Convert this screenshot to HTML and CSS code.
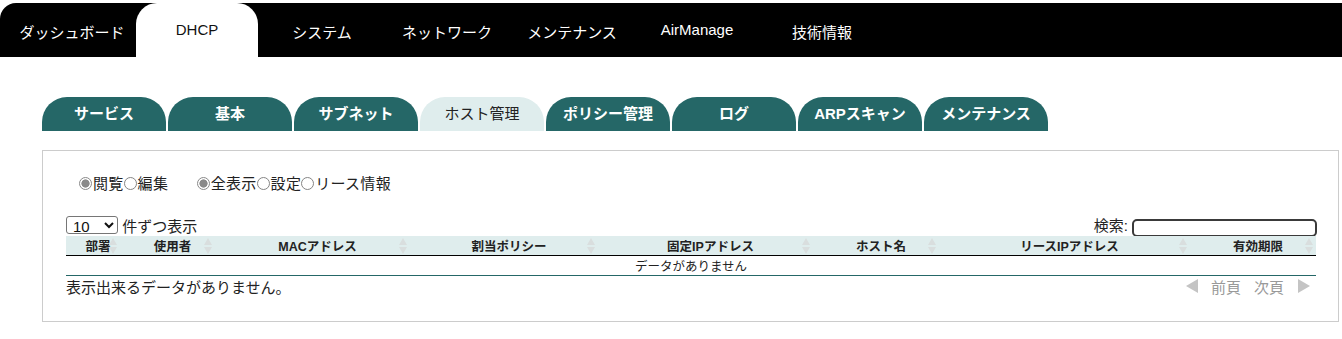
FILE: index.html
```html
<!DOCTYPE html>
<html lang="ja">
<head>
    <meta charset="UTF-8">
    <meta name="viewport" content="width=device-width, initial-scale=1.0">
    <title>DHCP - ホスト管理</title>
    <link rel="stylesheet" href="styles.css">
</head>
<body>
    <nav class="global-nav">
        <a class="nav-item" href="#">ダッシュボード</a>
        <a class="nav-item latin active" href="#">DHCP</a>
        <a class="nav-item" href="#">システム</a>
        <a class="nav-item" href="#">ネットワーク</a>
        <a class="nav-item" href="#">メンテナンス</a>
        <a class="nav-item latin" href="#">AirManage</a>
        <a class="nav-item" href="#">技術情報</a>
    </nav>

    <div class="sub-tabs">
        <a class="sub-tab" href="#">サービス</a>
        <a class="sub-tab" href="#">基本</a>
        <a class="sub-tab" href="#">サブネット</a>
        <a class="sub-tab active" href="#">ホスト管理</a>
        <a class="sub-tab" href="#">ポリシー管理</a>
        <a class="sub-tab" href="#">ログ</a>
        <a class="sub-tab" href="#">ARPスキャン</a>
        <a class="sub-tab" href="#">メンテナンス</a>
    </div>

    <div class="panel">
        <div class="view-options">
            <span class="radio-group">
                <label><input type="radio" class="radio" name="mode" checked>閲覧</label><label><input type="radio" class="radio" name="mode">編集</label>
            </span>
            <span class="radio-group">
                <label><input type="radio" class="radio" name="filter" checked>全表示</label><label><input type="radio" class="radio" name="filter">設定</label><label><input type="radio" class="radio" name="filter">リース情報</label>
            </span>
        </div>

        <div class="table-controls">
            <label class="length">
                <select class="length-select">
                    <option>10</option>
                    <option>25</option>
                    <option>50</option>
                    <option>100</option>
                </select>
                件ずつ表示
            </label>
            <label class="search">検索:<input type="text" class="search-input"></label>
        </div>

        <table class="host-table">
            <colgroup>
                <col style="width: 54px">
                <col style="width: 95px">
                <col style="width: 195px">
                <col style="width: 188px">
                <col style="width: 215px">
                <col style="width: 126px">
                <col style="width: 251px">
                <col style="width: 126px">
            </colgroup>
            <thead>
                <tr>
                    <th>部署<svg class="sort" viewBox="0 0 10 18"><path d="M5 1 L9 8 H1 Z M5 17 L9 10 H1 Z"/></svg></th>
                    <th>使用者<svg class="sort" viewBox="0 0 10 18"><path d="M5 1 L9 8 H1 Z M5 17 L9 10 H1 Z"/></svg></th>
                    <th>MACアドレス<svg class="sort" viewBox="0 0 10 18"><path d="M5 1 L9 8 H1 Z M5 17 L9 10 H1 Z"/></svg></th>
                    <th>割当ポリシー<svg class="sort" viewBox="0 0 10 18"><path d="M5 1 L9 8 H1 Z M5 17 L9 10 H1 Z"/></svg></th>
                    <th>固定IPアドレス<svg class="sort" viewBox="0 0 10 18"><path d="M5 1 L9 8 H1 Z M5 17 L9 10 H1 Z"/></svg></th>
                    <th>ホスト名<svg class="sort" viewBox="0 0 10 18"><path d="M5 1 L9 8 H1 Z M5 17 L9 10 H1 Z"/></svg></th>
                    <th>リースIPアドレス<svg class="sort" viewBox="0 0 10 18"><path d="M5 1 L9 8 H1 Z M5 17 L9 10 H1 Z"/></svg></th>
                    <th>有効期限<svg class="sort" viewBox="0 0 10 18"><path d="M5 1 L9 8 H1 Z M5 17 L9 10 H1 Z"/></svg></th>
                </tr>
            </thead>
            <tbody>
                <tr>
                    <td class="empty" colspan="8">データがありません</td>
                </tr>
            </tbody>
        </table>

        <div class="table-footer">
            <span class="info">表示出来るデータがありません。</span>
            <span class="paginate">
                <svg class="page-arrow" viewBox="0 0 13 14"><path d="M12 0 V14 L0 7 Z"/></svg>
                <span class="page-link">前頁</span>
                <span class="page-link">次頁</span>
                <svg class="page-arrow" viewBox="0 0 13 14"><path d="M1 0 V14 L13 7 Z"/></svg>
            </span>
        </div>
    </div>
</body>
</html>
```

FILE: styles.css
```css
body {
    margin: 0;
    font-family: "Liberation Sans", "Noto Sans CJK JP", sans-serif;
    font-size: 15px;
    color: #222;
    background: #fff;
}
a {
    text-decoration: none;
}

/* global navigation */
.global-nav {
    display: flex;
    margin-top: 3px;
    height: 54px;
    padding-left: 11px;
    background: #000;
    border-top-left-radius: 16px;
}
.nav-item {
    width: 122px;
    margin-right: 3px;
    padding-top: 20px;
    line-height: 20px;
    text-align: center;
    color: #fff;
    font-size: 15px;
}
.nav-item.latin {
    padding-top: 17px;
}
.nav-item.active {
    background: #fff;
    color: #111;
    border-radius: 21px 21px 0 0;
}

/* sub tabs */
.sub-tabs {
    display: flex;
    gap: 2px;
    margin: 40px 0 0 42px;
}
.sub-tab {
    width: 124px;
    height: 34px;
    padding-bottom: 4px;
    box-sizing: border-box;
    display: flex;
    align-items: center;
    justify-content: center;
    background: #256767;
    color: #fff;
    font-weight: bold;
    font-size: 15px;
    border-radius: 25px 25px 0 0;
}
.sub-tab.active {
    background: #dfeded;
    color: #222;
    font-weight: normal;
}

/* content panel */
.panel {
    margin: 19px 3px 0 42px;
    height: 172px;
    box-sizing: border-box;
    padding: 23px 21px 0 23px;
    border: 1px solid #ccc;
}
.view-options {
    margin-left: 13px;
    line-height: 20px;
    letter-spacing: 0.3px;
}
.radio-group {
    margin-right: 24px;
}
.radio {
    appearance: none;
    display: inline-block;
    box-sizing: border-box;
    width: 13px;
    height: 13px;
    margin: 0 1px 0 0;
    border: 1px solid #858585;
    border-radius: 50%;
    vertical-align: -1px;
    background: #fff;
}
.radio:checked {
    border-color: #8a8a8a;
    background: radial-gradient(circle, #8a8a8a 0 3.8px, #fff 4.4px);
}

.table-controls {
    display: flex;
    justify-content: space-between;
    align-items: center;
    margin-top: 21px;
    height: 21px;
}
.length-select {
    width: 52px;
    height: 18px;
    padding: 0 0 0 2px;
    font-family: "Liberation Sans", sans-serif;
    font-size: 15px;
    color: #111;
    border: 1px solid #767676;
    border-radius: 3px;
    background: #fff;
}
.search-input {
    width: 185px;
    height: 18px;
    margin: 0 0 0 4px;
    padding: 0 4px;
    box-sizing: border-box;
    border: 2px solid #3a3a3a;
    border-radius: 5px;
    vertical-align: -2px;
}

/* table */
.host-table {
    width: 1250px;
    table-layout: fixed;
    border-collapse: collapse;
    font-size: 12.5px;
}
.host-table th {
    position: relative;
    height: 19px;
    padding: 0 4px 0 14px;
    background: #dfeded;
    border-bottom: 1px solid #000;
    text-align: center;
    font-weight: bold;
    color: #222;
    white-space: nowrap;
}
.sort {
    position: absolute;
    top: 1px;
    right: 2px;
    width: 10px;
    height: 18px;
    fill: #d9dede;
}
.host-table td.empty {
    height: 19px;
    padding: 0;
    text-align: center;
    border-bottom: 1px solid #256767;
}

.table-footer {
    display: flex;
    justify-content: space-between;
    align-items: center;
    height: 20px;
}
.paginate {
    display: flex;
    align-items: center;
    gap: 12px;
    padding-right: 7px;
    color: #999;
}
.page-link {
    margin-right: 1px;
}
.page-arrow {
    width: 13px;
    height: 14px;
    fill: #c4c4c4;
}
```
